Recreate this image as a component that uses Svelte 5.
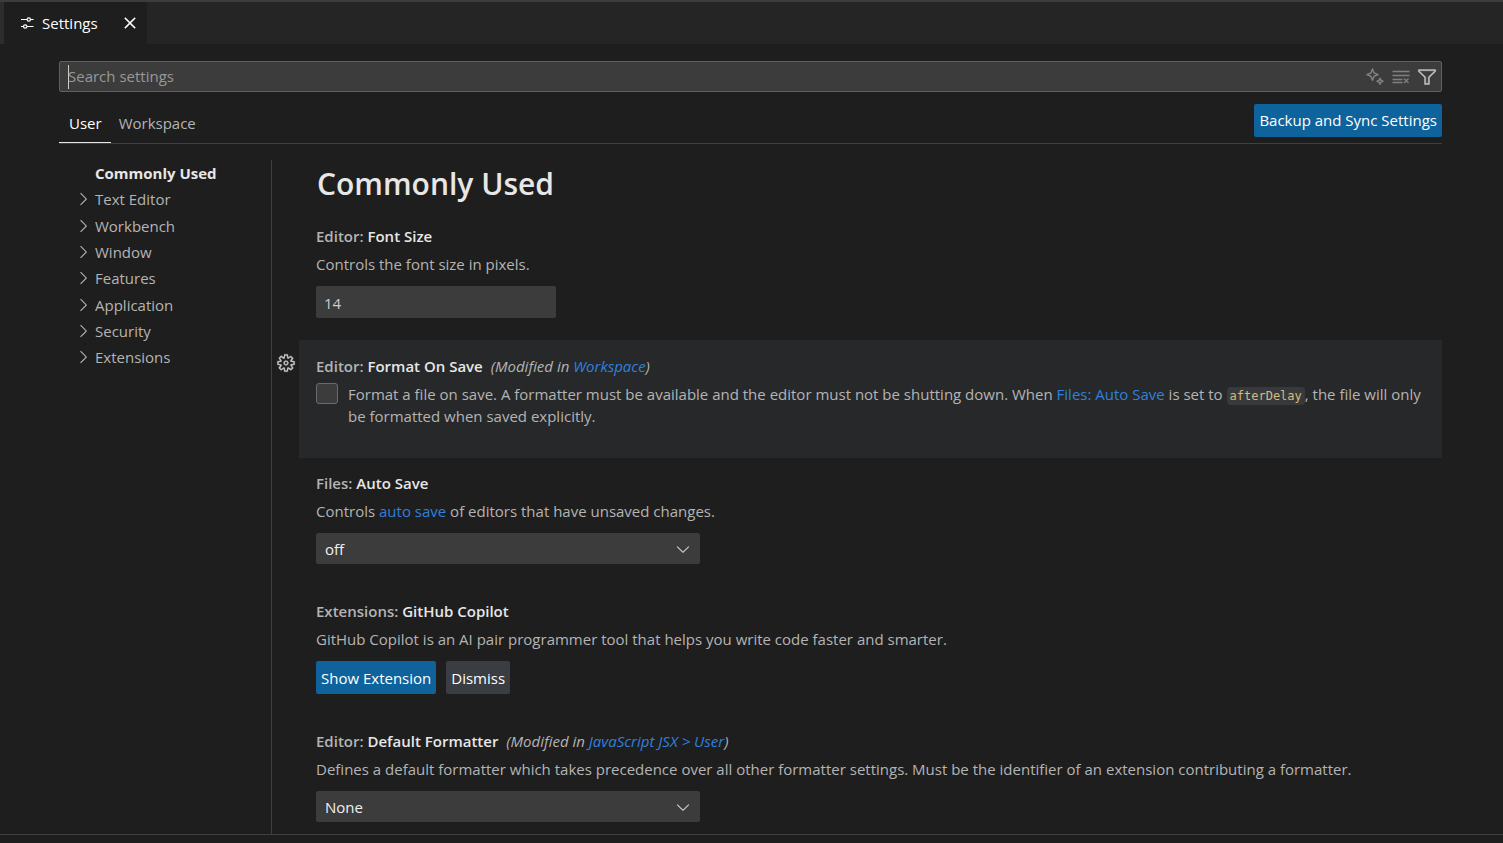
<script lang="ts">
  let query = $state('');
  let fontSize = $state('14');
  let formatOnSave = $state(false);
  let autoSave = $state('off');
  let formatter = $state('None');

  const groups = [
    'Commonly Used',
    'Text Editor',
    'Workbench',
    'Window',
    'Features',
    'Application',
    'Security',
    'Extensions'
  ];
</script>

<div class="window">
  <header class="tabbar">
    <div class="tab">
      <svg class="icon" viewBox="0 0 16 16" fill="none" stroke="currentColor" stroke-width="1.2">
        <path d="M2 4.5h6M11.6 4.5H14.6M2 11.5h2.4M8 11.5h6.6" />
        <circle cx="9.8" cy="4.5" r="1.7" />
        <circle cx="6.2" cy="11.5" r="1.7" />
      </svg>
      <span>Settings</span>
      <button class="close" aria-label="Close">
        <svg viewBox="0 0 16 16" fill="currentColor" stroke="currentColor" stroke-width=".3">
          <path d="M8 8.707l3.646 3.647.708-.707L8.707 8l3.647-3.646-.707-.708L8 7.293 4.354 3.646l-.707.708L7.293 8l-3.646 3.646.707.708L8 8.707z" />
        </svg>
      </button>
    </div>
  </header>

  <main class="editor">
    <div class="search">
      <span class="caret"></span>
      <input type="text" aria-label="Search settings" placeholder="Search settings" bind:value={query} />
      <button class="tool dim" aria-label="Search with AI">
        <svg viewBox="0 0 20 20" fill="none" stroke="currentColor" stroke-width="1.5" stroke-linejoin="round">
          <path d="M7.5 2l1.6 4 4 1.6-4 1.6-1.6 4-1.6-4-4-1.6 4-1.6z" />
          <path d="M15 11.3l.9 2 2 .9-2 .9-.9 2-.9-2-2-.9 2-.9z" />
        </svg>
      </button>
      <button class="tool dim" aria-label="Clear settings search">
        <svg viewBox="0 0 20 20" fill="none" stroke="currentColor" stroke-width="1.3">
          <path d="M1.500 4.500h17M1.500 8.500h17M1.500 12.500h10M1.500 15.500h10M13 11.500l4.500 4.500M17.500 11.500l-4.500 4.500" />
        </svg>
      </button>
      <button class="tool" aria-label="Filter settings">
        <svg viewBox="0 0 16 16" fill="currentColor" stroke="currentColor" stroke-width=".3">
          <path d="M15 2v1.67l-5 4.759V14H6V8.429l-5-4.76V2h14zM7 8v5h2V8l5-4.76V3H2v.24L7 8z" />
        </svg>
      </button>
    </div>

    <div class="scopes">
      <button class="scope active">User</button>
      <button class="scope">Workspace</button>
      <button class="btn primary sync">Backup and Sync Settings</button>
    </div>

    <div class="body">
      <nav class="toc">
        {#each groups as group, i}
          <a href="#settings" class:selected={i === 0}>
            <span class="twistie">
              {#if i > 0}
                <svg viewBox="0 0 16 16" fill="currentColor">
                  <path d="M10.072 8.024L5.715 3.667l.618-.62L11 7.716v.618L6.333 13l-.618-.619 4.357-4.357z" />
                </svg>
              {/if}
            </span>
            {group}
          </a>
        {/each}
      </nav>

      <section class="list" id="settings">
        <h1>Commonly Used</h1>

        <div class="row">
          <div class="item">
            <h2><label for="font-size">Editor: <b>Font Size</b></label></h2>
            <p>Controls the font size in pixels.</p>
            <input id="font-size" class="number" type="text" inputmode="numeric" bind:value={fontSize} />
          </div>
        </div>

        <div class="row">
          <button class="gear" aria-label="More actions">
            <svg viewBox="0 0 16 16" fill="currentColor" fill-rule="evenodd" stroke="currentColor" stroke-width=".2">
              <path d="M9.1 4.4L8.6 2H7.4l-.5 2.4-.7.3-2-1.3-.9.8 1.3 2-.2.7-2.4.5v1.2l2.4.5.3.8-1.3 2 .8.8 2-1.3.8.3.4 2.3h1.2l.5-2.4.8-.3 2 1.3.8-.8-1.3-2 .3-.8 2.3-.4V7.4l-2.4-.5-.3-.8 1.3-2-.8-.8-2 1.3-.7-.2zM9.4 1l.5 2.4L12 2.1l2 2-1.4 2.1 2.4.4v2.8l-2.4.5L14 12l-2 2-2.1-1.4-.5 2.4H6.6l-.5-2.4L4 13.9l-2-2 1.4-2.1L1 9.4V6.6l2.4-.5L2.1 4l2-2 2.1 1.4.4-2.4h2.8zm.6 7c0 1.1-.9 2-2 2s-2-.9-2-2 .9-2 2-2 2 .9 2 2zM8 9c.6 0 1-.4 1-1s-.4-1-1-1-1 .4-1 1 .4 1 1 1z" />
            </svg>
          </button>
          <div class="item focused">
            <h2>Editor: <b>Format On Save</b> <em>(Modified in <a href="#workspace">Workspace</a>)</em></h2>
            <div class="check">
              <input id="format-on-save" type="checkbox" bind:checked={formatOnSave} />
              <label for="format-on-save">Format a file on save. A formatter must be available and the editor must not be shutting down. When <a href="#auto-save">Files: Auto Save</a> is set to <code>afterDelay</code>, the file will only be formatted when saved explicitly.</label>
            </div>
          </div>
        </div>

        <div class="row">
          <div class="item">
            <h2><label for="auto-save">Files: <b>Auto Save</b></label></h2>
            <p>Controls <a href="#auto-save">auto save</a> of editors that have unsaved changes.</p>
            <div class="select">
              <select id="auto-save" bind:value={autoSave}>
                <option>off</option>
                <option>afterDelay</option>
                <option>onFocusChange</option>
                <option>onWindowChange</option>
              </select>
              <svg viewBox="0 0 16 16" fill="currentColor">
                <path d="M7.976 10.072l4.357-4.357.62.618L8.284 11h-.618L3 6.333l.619-.618 4.357 4.357z" />
              </svg>
            </div>
          </div>
        </div>

        <div class="row">
          <div class="item">
            <h2>Extensions: <b>GitHub Copilot</b></h2>
            <p>GitHub Copilot is an AI pair programmer tool that helps you write code faster and smarter.</p>
            <div class="actions">
              <button class="btn primary">Show Extension</button>
              <button class="btn">Dismiss</button>
            </div>
          </div>
        </div>

        <div class="row">
          <div class="item">
            <h2><label for="formatter">Editor: <b>Default Formatter</b></label> <em>(Modified in <a href="#user">JavaScript JSX &gt; User</a>)</em></h2>
            <p>Defines a default formatter which takes precedence over all other formatter settings. Must be the identifier of an extension contributing a formatter.</p>
            <div class="select">
              <select id="formatter" bind:value={formatter}>
                <option>None</option>
              </select>
              <svg viewBox="0 0 16 16" fill="currentColor">
                <path d="M7.976 10.072l4.357-4.357.62.618L8.284 11h-.618L3 6.333l.619-.618 4.357 4.357z" />
              </svg>
            </div>
          </div>
        </div>
      </section>
    </div>
  </main>
  <footer></footer>
</div>

<style>
  :global(body) { background: #1e1e1e; }
  .window {
    display: flex;
    flex-direction: column;
    min-height: 100vh;
    box-sizing: border-box;
    border-top: 2px solid #3c3c3c;
    background: #1e1e1e;
    color: #b4b4b4;
    font: 15px/22px "Segoe UI", "Open Sans", "Noto Sans", sans-serif;
  }
  .window :global(*) { box-sizing: border-box; }
  button, input, select { font: inherit; color: inherit; border: 0; margin: 0; }
  button { padding: 0; background: none; cursor: pointer; }
  svg { display: block; width: 20px; height: 20px; flex: none; }
  a { color: #3080dc; text-decoration: none; }

  .tabbar { display: flex; height: 42px; background: #252526; border-left: 4px solid #2d2d2d; }
  .tab { display: flex; align-items: center; padding: 0 7px 0 15px; background: #1e1e1e; color: #fff; }
  .tab .icon { width: 16px; height: 16px; margin-right: 7px; }
  .close { margin-left: 22px; }

  .editor { flex: 1; display: flex; flex-direction: column; padding: 17px 61px 0 59px; }
  .search { display: flex; align-items: center; height: 31px; padding: 0 4px 0 8px; border: 1px solid #007acc; border-radius: 2px; background: #3c3c3c; }
  .search input { flex: 1; height: 100%; padding: 0 0 2px; background: none; outline: 0; }
  .search input::placeholder { color: #989898; opacity: 1; }
  .caret { width: 1px; height: 24px; margin-right: -1px; background: #ccc; }
  .tool { margin-left: 6px; color: #c5c5c5; }
  .tool.dim { color: #808080; }

  .scopes { display: flex; align-items: center; height: 52px; border-bottom: 1px solid #404040; }
  .scope { align-self: stretch; padding: 11px 8px 0; }
  .scope.active { padding: 12px 9px 0 10px; border-bottom: 1px solid #e7e7e7; color: #fff; }
  .btn { height: 33px; padding: 0 5px; border-radius: 2px; background: #3a3d41; color: #fff; }
  .btn.primary { background: #0e639c; }
  .sync { margin: 5px 0 0 auto; }

  .body { flex: 1; display: flex; padding-top: 16px; }
  .toc { flex: none; width: 213px; border-right: 1px solid #404040; }
  .toc a { display: flex; align-items: center; height: 26px; padding-left: 14px; color: inherit; }
  /* every third row takes the spare pixel */
  .toc a:nth-child(3n) { height: 27px; }
  .toc .twistie { width: 22px; }
  .toc .selected { color: #e7e7e7; font-weight: 700; }

  .list { flex: 1; min-width: 0; }
  h1 { margin: 0; padding: 4px 0 7px 45px; font-size: 30px; line-height: 40px; font-weight: 600; color: #e7e7e7; }
  .row { display: flex; align-items: flex-start; }
  .gear { width: 27px; margin-right: -27px; padding: 13px 0 0 4px; color: #c5c5c5; }
  .item { flex: 1; min-width: 0; margin-left: 27px; padding: 14px 17px 22px; }
  .item.focused { background: #27282a; padding-top: 15px; padding-bottom: 31px; }
  .row:last-child .item { padding-bottom: 0; }
  h2 { margin: 0 0 6px; font-size: inherit; font-weight: 600; }
  h2 b { color: #e7e7e7; font-weight: 600; }
  h2 em { margin-left: 4px; font-weight: 400; }
  p { margin: 0 0 11px; }
  .number { display: block; width: 240px; height: 32px; padding: 2px 8px 0; border-radius: 2px; background: #3c3c3c; color: #ccc; }

  .check { display: flex; align-items: flex-start; }
  .check input { flex: none; appearance: none; width: 22px; height: 21px; margin-right: 10px; border: 1px solid #6b6b6b; border-radius: 3px; background: #3c3c3c; }
  .check input:checked { background: #0e639c; }
  code { padding: 2px 3px; border-radius: 4px; background: #38393b; color: #d7ba7d; font: 12px "DejaVu Sans Mono", monospace; }

  .select { display: grid; width: 384px; align-items: center; }
  .select select { grid-area: 1 / 1; appearance: none; height: 31px; padding: 0 28px 0 9px; border-radius: 2px; background: #3c3c3c; color: #f0f0f0; }
  .select svg { grid-area: 1 / 1; justify-self: end; margin-right: 7px; pointer-events: none; color: #ccc; }
  .actions { display: flex; gap: 10px; }

  footer { height: 9px; border-top: 1px solid #404040; }
</style>
